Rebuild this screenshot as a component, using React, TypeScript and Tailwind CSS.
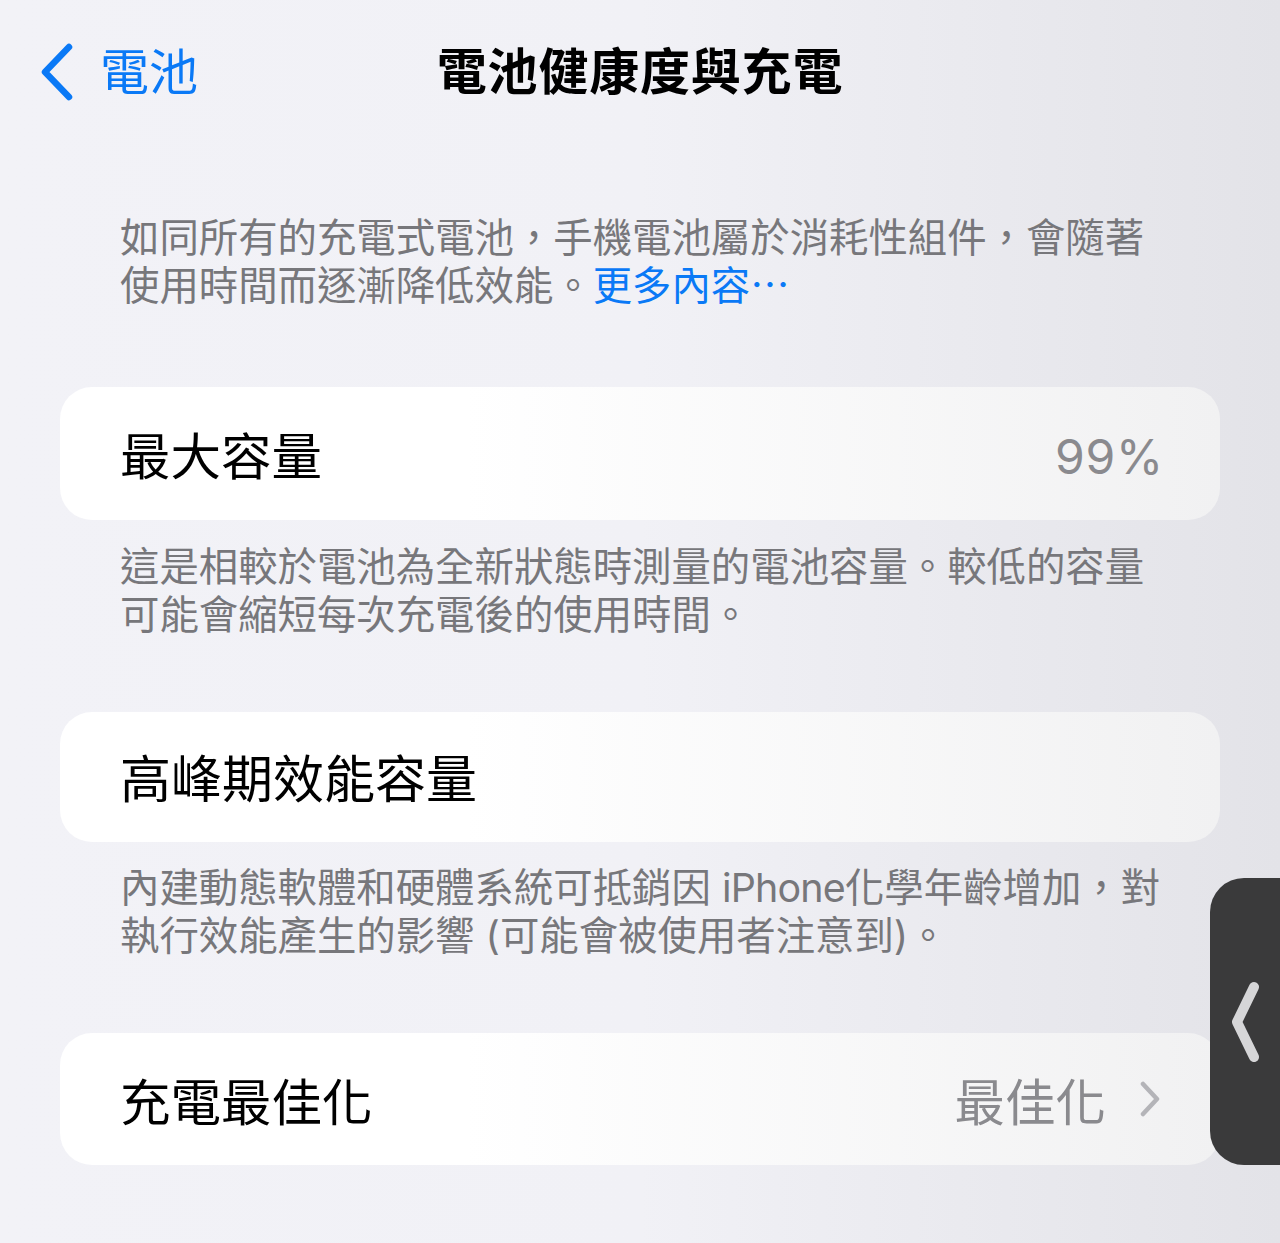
import React from "react";

const font = "font-['Inter','Noto_Sans_CJK_TC',sans-serif]";

function Card({ h, children }: { h: string; children: React.ReactNode }) {
  return (
    <div
      className={`mx-[60px] flex items-center justify-between rounded-[32px] bg-[linear-gradient(to_right,#ffffff_35%,#f1f1f2_100%)] px-[60px] pt-[7px] ${h}`}
    >
      {children}
    </div>
  );
}

function Footer({ children }: { children: React.ReactNode }) {
  return (
    <p className="whitespace-nowrap px-[120px] text-[39.4px] leading-[48px] text-[#77777b]">
      {children}
    </p>
  );
}

export default function App() {
  return (
    <div
      className={`relative h-[1243px] w-[1280px] overflow-hidden bg-[linear-gradient(to_right,#f2f2f7_0%,#f1f1f6_50%,#e3e3e8_100%)] ${font}`}
    >
      {/* nav bar */}
      <div className="grid h-[146px] grid-cols-[1fr_auto_1fr] items-center pb-[2px]">
        <div className="flex items-center gap-[26px] pl-[38px] text-[#0a79f6]">
          <svg width="36" height="58" viewBox="0 0 36 58" fill="none">
            <path d="M31 4 L7 29 L31 54" stroke="currentColor" strokeWidth="6.5" strokeLinecap="round" strokeLinejoin="round" />
          </svg>
          <span className="text-[49px] leading-none">電池</span>
        </div>
        <h1 className="text-[50px] font-bold leading-none tracking-[0.8px] text-black">電池健康度與充電</h1>
        <div />
      </div>

      <div className="pt-[68px]">
        <Footer>
          如同所有的充電式電池，手機電池屬於消耗性組件，會隨著
          <br />
          使用時間而逐漸降低效能。<span className="text-[#0a79f6]">更多內容⋯</span>
        </Footer>
      </div>

      <div className="mt-[77px]">
        <Card h="h-[133px]">
          <div className="text-[50.5px] text-black">最大容量</div>
          <div className="-mr-[4px] text-[48px] tracking-[0.8px] text-[#8a8a8e]">99%</div>
        </Card>
      </div>

      <div className="mt-[23px]">
        <Footer>
          這是相較於電池為全新狀態時測量的電池容量。較低的容量
          <br />
          可能會縮短每次充電後的使用時間。
        </Footer>
      </div>

      <div className="mt-[73px]">
        <Card h="h-[130px]">
          <div className="text-[51px] text-black">高峰期效能容量</div>
        </Card>
      </div>

      <div className="mt-[22px]">
        <Footer>
          內建動態軟體和硬體系統可抵銷因 <span className="tracking-[-0.8px]">iPhone</span>化學年齡增加，對
          <br />
          執行效能產生的影響 (可能會被使用者注意到)。
        </Footer>
      </div>

      <div className="mt-[73px]">
        <Card h="h-[132px]">
          <div className="text-[50.5px] text-black">充電最佳化</div>
          <div className="flex items-center gap-[34px] text-[50.5px] text-[#8a8a8e]">
            <span>最佳化</span>
            <svg className="-mt-[8px]" width="20" height="36" viewBox="0 0 20 36" fill="none">
              <path d="M3 3 L17 18 L3 33" stroke="#b4b4b8" strokeWidth="4.5" strokeLinecap="round" strokeLinejoin="round" />
            </svg>
          </div>
        </Card>
      </div>

      {/* assistive overlay on right edge */}
      <div className="absolute left-[1210px] top-[878px] flex h-[287px] w-[80px] items-center rounded-l-[34px] bg-[#3a3a3b] pl-[20px]">
        <svg width="30" height="82" viewBox="0 0 30 82" fill="none">
          <path d="M24 6 L7 41 L24 76" stroke="#d6d6d8" strokeWidth="10" strokeLinecap="round" strokeLinejoin="round" />
        </svg>
      </div>
    </div>
  );
}
